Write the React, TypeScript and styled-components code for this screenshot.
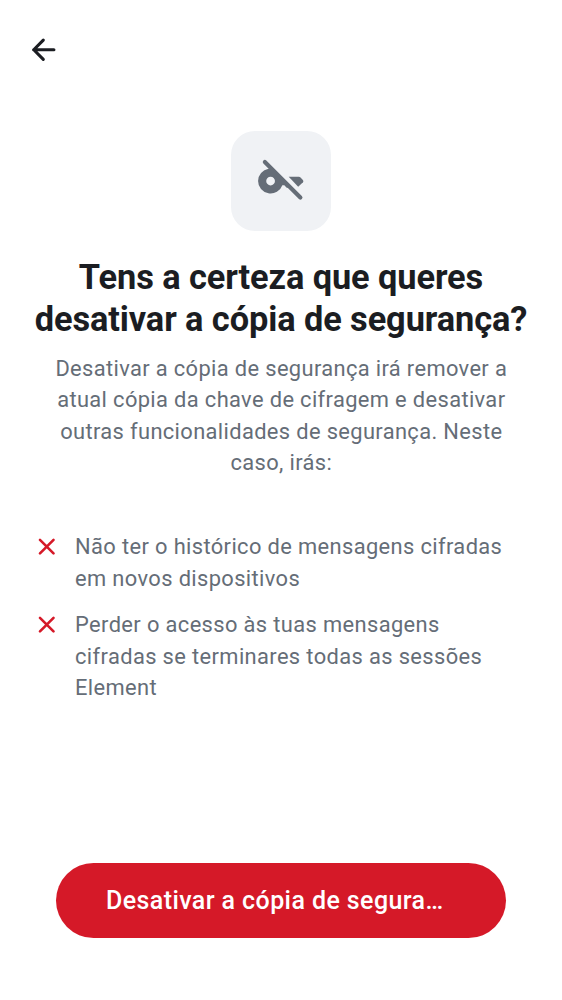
import React from 'react';
import styled, { createGlobalStyle } from 'styled-components';

const Global = createGlobalStyle`
  * { box-sizing: border-box; }
  body { margin: 0; background: #fff; font-family: Roboto, sans-serif; }
`;

const Screen = styled.main`
  width: 562px;
  height: 1000px;
  display: flex;
  flex-direction: column;
  background: #fff;
  overflow: hidden;
`;

const TopBar = styled.header`
  height: 100px;
  padding: 0 25px;
  display: flex;
  align-items: center;
`;

const BackButton = styled.button`
  display: flex;
  padding: 0;
  border: 0;
  background: none;
  color: #1b1d22;
`;

const Hero = styled.section`
  display: flex;
  flex-direction: column;
  align-items: center;
  padding-top: 31px;
  text-align: center;
`;

const IconTile = styled.div`
  width: 100px;
  height: 100px;
  border-radius: 24px;
  background: #f0f2f5;
  color: #656d77;
  display: flex;
  align-items: center;
  justify-content: center;
`;

const Title = styled.h1`
  margin: 25px 0 0;
  font-size: 34.375px;
  line-height: 42.2px;
  font-weight: 700;
  letter-spacing: -0.09px;
  color: #1b1d22;
  white-space: nowrap;
`;

const Subtitle = styled.p`
  margin: 12.8px 0 0;
  padding-left: 0.6px;
  font-size: 21.875px;
  line-height: 31.25px;
  letter-spacing: 0.365px;
  color: #656d77;
  white-space: nowrap;
`;

const Consequences = styled.ul`
  list-style: none;
  margin: 53.1px 0 0;
  padding: 0 31px;
  display: flex;
  flex-direction: column;
  gap: 15.6px;
`;

const Consequence = styled.li`
  display: flex;
  gap: 12.8px;
  font-size: 21.875px;
  line-height: 31.25px;
  letter-spacing: 0.38px;
  color: #656d77;
  white-space: nowrap;
  svg { flex: none; color: #d51928; }
`;

const Footer = styled.footer`
  margin-top: auto;
  padding: 0 56px 62.5px;
`;

const DangerButton = styled.button`
  display: block;
  width: 100%;
  height: 75px;
  border: 0;
  border-radius: 38px;
  padding: 1px 50px 0;
  background: #d51928;
  color: #fff;
  font: 500 25px/38px Roboto, sans-serif;
  letter-spacing: 0.41px;
  text-align: left;
  white-space: nowrap;
`;

const items = [
  ['Não ter o histórico de mensagens cifradas', 'em novos dispositivos'],
  ['Perder o acesso às tuas mensagens', 'cifradas se terminares todas as sessões', 'Element'],
];

const Lines = ({ lines }: { lines: string[] }) => (
  <>{lines.map((line, i) => <React.Fragment key={line}>{i > 0 && <br />}{line}</React.Fragment>)}</>
);

export default function App() {
  return (
    <Screen>
      <Global />
      <TopBar>
        <BackButton aria-label="Voltar">
          <svg width="37.5" height="37.5" viewBox="0 0 24 24" fill="none" stroke="currentColor" strokeWidth="2" strokeLinecap="round" strokeLinejoin="round">
            <path d="M18.5 12H5.5M11.7 5.9L5.6 12l6.1 6.1" />
          </svg>
        </BackButton>
      </TopBar>
      <Hero>
        <IconTile>
          <svg width="50" height="50" viewBox="0 0 24 24" fill="currentColor">
            <path fillRule="evenodd" d="M6 6.08A6 6 0 1 0 12.65 14L13.6 14l.9 1q.4.4.8.2l.7-.3q.6-.2 1 .1L17.5 16.5 7 6Zm1 3.82a2.1 2.1 0 1 1 0 4.2 2.1 2.1 0 0 1 0-4.2Z" />
            <path d="M15.7 10h4.9q.45 0 .75.3l1.15 1.25q.5.55.05 1.1l-2.3 2.1Z" />
            <path d="M4.25 2.9 21.3 19.95" stroke="currentColor" strokeWidth="2" strokeLinecap="round" />
          </svg>
        </IconTile>
        <Title><Lines lines={['Tens a certeza que queres', 'desativar a cópia de segurança?']} /></Title>
        <Subtitle><Lines lines={['Desativar a cópia de segurança irá remover a', 'atual cópia da chave de cifragem e desativar', 'outras funcionalidades de segurança. Neste', 'caso, irás:']} /></Subtitle>
      </Hero>
      <Consequences>
        {items.map((lines) => (
          <Consequence key={lines[0]}>
            <svg width="31.25" height="31.25" viewBox="0 0 24 24" fill="none" stroke="currentColor" strokeWidth="2" strokeLinecap="round">
              <path d="M6.9 6.8 17.3 17.2M17.3 6.8 6.9 17.2" />
            </svg>
            <span><Lines lines={lines} /></span>
          </Consequence>
        ))}
      </Consequences>
      <Footer>
        <DangerButton>Desativar a cópia de segura…</DangerButton>
      </Footer>
    </Screen>
  );
}
